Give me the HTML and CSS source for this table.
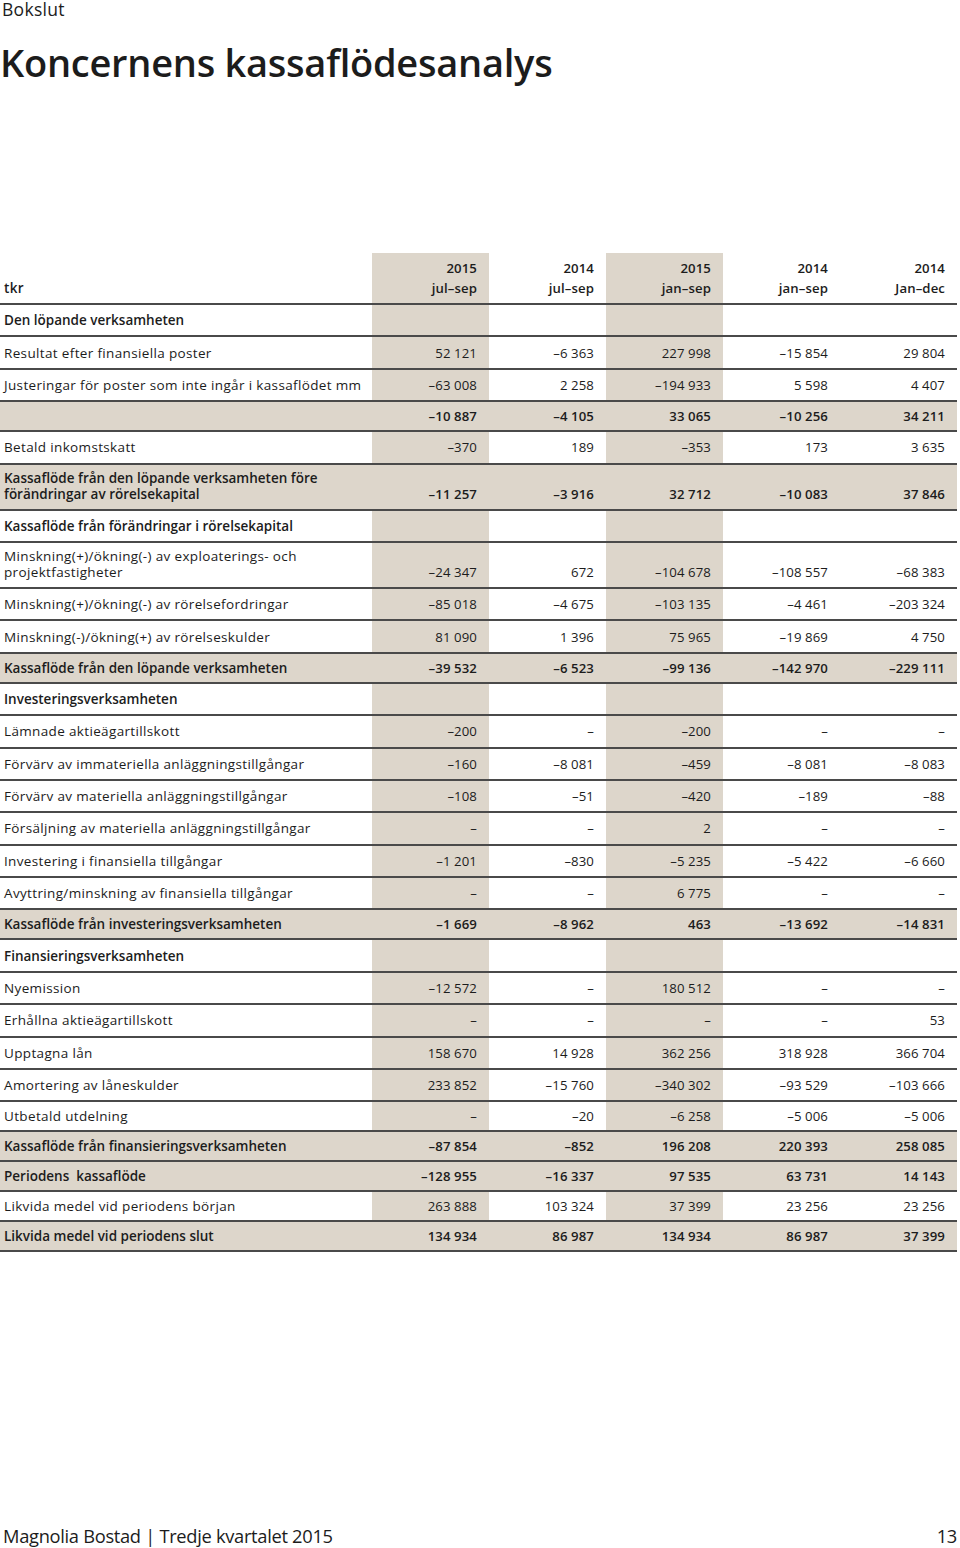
FILE: index.html
```html
<!DOCTYPE html>
<html lang="sv">
<head>
<meta charset="utf-8">
<title>Koncernens kassaflödesanalys</title>
<link rel="stylesheet" href="styles.css">
</head>
<body>
<div class="page">
  <div class="section">Bokslut</div>
  <h1 class="title">Koncernens kassaflödesanalys</h1>

  <table class="cf">
    <colgroup>
      <col class="lab">
      <col class="num shade">
      <col class="num">
      <col class="num shade">
      <col class="num">
      <col class="num">
    </colgroup>
    <thead>
      <tr class="head">
        <th class="l">tkr</th>
        <th>2015<br>jul–sep</th>
        <th>2014<br>jul–sep</th>
        <th>2015<br>jan–sep</th>
        <th>2014<br>jan–sep</th>
        <th>2014<br>Jan–dec</th>
      </tr>
    </thead>
    <tbody>
      <tr class="b"><td>Den löpande verksamheten</td><td></td><td></td><td></td><td></td><td></td></tr>
      <tr><td>Resultat efter finansiella poster</td><td>52 121</td><td>–6 363</td><td>227 998</td><td>–15 854</td><td>29 804</td></tr>
      <tr><td>Justeringar för poster som inte ingår i kassaflödet mm</td><td>–63 008</td><td>2 258</td><td>–194 933</td><td>5 598</td><td>4 407</td></tr>
      <tr class="s b"><td></td><td>–10 887</td><td>–4 105</td><td>33 065</td><td>–10 256</td><td>34 211</td></tr>
      <tr><td>Betald inkomstskatt</td><td>–370</td><td>189</td><td>–353</td><td>173</td><td>3 635</td></tr>
      <tr class="s b two"><td>Kassaflöde från den löpande verksamheten före<br>förändringar av rörelsekapital</td><td>–11 257</td><td>–3 916</td><td>32 712</td><td>–10 083</td><td>37 846</td></tr>
      <tr class="b"><td>Kassaflöde från förändringar i rörelsekapital</td><td></td><td></td><td></td><td></td><td></td></tr>
      <tr class="two"><td>Minskning(+)/ökning(-) av exploaterings- och<br>projektfastigheter</td><td>–24 347</td><td>672</td><td>–104 678</td><td>–108 557</td><td>–68 383</td></tr>
      <tr><td>Minskning(+)/ökning(-) av rörelsefordringar</td><td>–85 018</td><td>–4 675</td><td>–103 135</td><td>–4 461</td><td>–203 324</td></tr>
      <tr><td>Minskning(-)/ökning(+) av rörelseskulder</td><td>81 090</td><td>1 396</td><td>75 965</td><td>–19 869</td><td>4 750</td></tr>
      <tr class="s b"><td>Kassaflöde från den löpande verksamheten</td><td>–39 532</td><td>–6 523</td><td>–99 136</td><td>–142 970</td><td>–229 111</td></tr>
      <tr class="b"><td>Investeringsverksamheten</td><td></td><td></td><td></td><td></td><td></td></tr>
      <tr><td>Lämnade aktieägartillskott</td><td>–200</td><td>–</td><td>–200</td><td>–</td><td>–</td></tr>
      <tr><td>Förvärv av immateriella anläggningstillgångar</td><td>–160</td><td>–8 081</td><td>–459</td><td>–8 081</td><td>–8 083</td></tr>
      <tr><td>Förvärv av materiella anläggningstillgångar</td><td>–108</td><td>–51</td><td>–420</td><td>–189</td><td>–88</td></tr>
      <tr><td>Försäljning av materiella anläggningstillgångar</td><td>–</td><td>–</td><td>2</td><td>–</td><td>–</td></tr>
      <tr><td>Investering i finansiella tillgångar</td><td>–1 201</td><td>–830</td><td>–5 235</td><td>–5 422</td><td>–6 660</td></tr>
      <tr><td>Avyttring/minskning av finansiella tillgångar</td><td>–</td><td>–</td><td>6 775</td><td>–</td><td>–</td></tr>
      <tr class="s b"><td>Kassaflöde från investeringsverksamheten</td><td>–1 669</td><td>–8 962</td><td>463</td><td>–13 692</td><td>–14 831</td></tr>
      <tr class="b"><td>Finansieringsverksamheten</td><td></td><td></td><td></td><td></td><td></td></tr>
      <tr><td>Nyemission</td><td>–12 572</td><td>–</td><td>180 512</td><td>–</td><td>–</td></tr>
      <tr><td>Erhållna aktieägartillskott</td><td>–</td><td>–</td><td>–</td><td>–</td><td>53</td></tr>
      <tr><td>Upptagna lån</td><td>158 670</td><td>14 928</td><td>362 256</td><td>318 928</td><td>366 704</td></tr>
      <tr><td>Amortering av låneskulder</td><td>233 852</td><td>–15 760</td><td>–340 302</td><td>–93 529</td><td>–103 666</td></tr>
      <tr class="short"><td>Utbetald utdelning</td><td>–</td><td>–20</td><td>–6 258</td><td>–5 006</td><td>–5 006</td></tr>
      <tr class="s b"><td>Kassaflöde från finansieringsverksamheten</td><td>–87 854</td><td>–852</td><td>196 208</td><td>220 393</td><td>258 085</td></tr>
      <tr class="s b"><td>Periodens&nbsp; kassaflöde</td><td>–128 955</td><td>–16 337</td><td>97 535</td><td>63 731</td><td>14 143</td></tr>
      <tr class="short"><td>Likvida medel vid periodens början</td><td>263 888</td><td>103 324</td><td>37 399</td><td>23 256</td><td>23 256</td></tr>
      <tr class="s b"><td>Likvida medel vid periodens slut</td><td>134 934</td><td>86 987</td><td>134 934</td><td>86 987</td><td>37 399</td></tr>
    </tbody>
  </table>

  <div class="footer">
    <span>Magnolia Bostad | Tredje kvartalet 2015</span>
    <span>13</span>
  </div>
</div>
</body>
</html>
```

FILE: styles.css
```css
* { box-sizing: border-box; }
html, body { margin: 0; padding: 0; background: #fff; }
body {
  font-family: "Open Sans", "Liberation Sans", sans-serif;
  color: #1c1c1c;
}
.page {
  width: 960px;
  height: 1548px;
  display: flex;
  flex-direction: column;
}
.section {
  font-size: 17.5px;
  line-height: 18px;
  padding-left: 2px;
  letter-spacing: 0.3px;
}
.title {
  margin: 25px 0 0 0;
  font-size: 38px;
  line-height: 38px;
  font-weight: 600;
  letter-spacing: -0.25px;
}
.cf {
  margin-top: 172px;
  width: 957px;
  border-collapse: collapse;
  table-layout: fixed;
  font-size: 13.2px;
  letter-spacing: 0.1px;
}
col.lab { width: 372px; }
col.num { width: 117px; }
col.shade { background: #ddd6cb; }
.cf th, .cf td {
  padding: 0 12px 0 0;
  text-align: right;
  vertical-align: middle;
  white-space: nowrap;
}
.cf th:first-child, .cf td:first-child {
  text-align: left;
  padding-left: 4px;
  font-size: 13.5px;
  letter-spacing: 0.35px;
}
.head th {
  height: 51px;
  font-weight: 600;
  line-height: 20px;
  vertical-align: bottom;
  padding-bottom: 5px;
  border-bottom: 2px solid #4a4a4a;
}
.cf tbody tr { border-bottom: 2px solid #4a4a4a; }
.cf tbody td { height: 32.4px; line-height: 16px; }
.cf tbody tr.s td { height: 30px; }
.cf tbody tr.short td { height: 30px; }
.cf tbody tr.two td { height: 46px; vertical-align: bottom; padding-bottom: 7px; }
.cf tr.s { background: #ddd6cb; }
.cf tr.b td { font-weight: 600; }
.cf tr.b td:first-child { letter-spacing: 0; }
.footer {
  margin-top: auto;
  margin-bottom: 2px;
  display: flex;
  justify-content: space-between;
  font-size: 18.3px;
  line-height: 20px;
  padding: 0 3px 0 3px;
  letter-spacing: -0.3px;
}
```
